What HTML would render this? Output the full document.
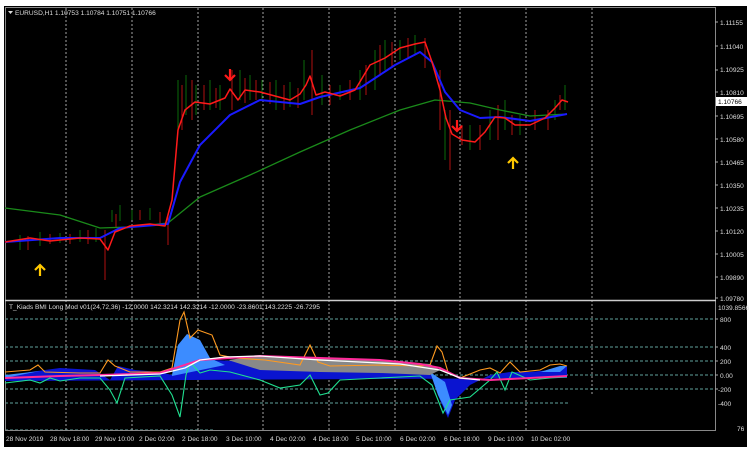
<!DOCTYPE html>
<html><head><meta charset="utf-8"><style>
body{margin:0;width:750px;height:450px;background:#fff;overflow:hidden}
svg{display:block}
text{font-family:"Liberation Sans",sans-serif;font-size:7px;fill:#ddd}
.b{font-size:6.6px}
</style></head><body>
<svg width="750" height="450" viewBox="0 0 750 450">
<rect x="4" y="6" width="743" height="441" fill="#000"/>
<g stroke="#ccc" stroke-width="0.8" stroke-dasharray="2,2">
<line x1="66" y1="8" x2="66" y2="430"/><line x1="132" y1="8" x2="132" y2="430"/>
<line x1="198" y1="8" x2="198" y2="430"/><line x1="263" y1="8" x2="263" y2="430"/>
<line x1="329" y1="8" x2="329" y2="430"/><line x1="395" y1="8" x2="395" y2="430"/>
<line x1="460" y1="8" x2="460" y2="430"/><line x1="526" y1="8" x2="526" y2="430"/>
<line x1="592" y1="8" x2="592" y2="395"/>
</g>
<g stroke="#7fd8d0" stroke-width="0.8" stroke-dasharray="3,2">
<line x1="5" y1="319" x2="715" y2="319"/><line x1="5" y1="347" x2="715" y2="347"/>
<line x1="5" y1="361" x2="715" y2="361"/><line x1="5" y1="375" x2="715" y2="375"/>
<line x1="5" y1="389" x2="715" y2="389"/><line x1="5" y1="403" x2="570" y2="403"/>
<line x1="5" y1="430" x2="215" y2="430"/>
</g>
<rect x="5.5" y="7.5" width="710" height="423" fill="none" stroke="#888" stroke-width="1"/>
<line x1="5" y1="300.5" x2="716" y2="300.5" stroke="#ccc" stroke-width="1.5"/>
<g stroke="#0a6a0a" stroke-width="1">
<path d="M20 235v15M40 232v14M60 233v10M80 230v12M96 228v14M112 210v12M120 205v16M132 210v10M150 208v12M178 80v50M186 75v40M196 85v30M210 80v30M220 85v25M240 70v30M250 75v25M262 80v20M276 80v30M290 82v25M304 60v40M322 75v30M340 85v15M360 70v30M375 50v40M385 40v30M400 40v20M415 35v20M445 110v50M470 125v25M490 110v30M505 100v30M520 115v20M555 100v20M565 85v25"/>
</g>
<g stroke="#b01010" stroke-width="1">
<path d="M28 236v14M50 234v10M70 234v10M88 230v14M105 230v50M116 214v14M140 210v10M160 212v14M168 215v30M182 85v45M192 80v40M204 85v25M216 88v20M232 70v40M245 78v25M256 80v20M270 82v22M284 85v25M298 88v20M312 50v65M330 85v20M350 80v20M366 65v30M380 45v30M392 42v25M408 38v20M425 38v30M440 70v60M450 110v60M462 125v20M480 125v25M498 105v35M512 115v20M535 110v20M548 110v20M560 95v15"/>
</g>
<polyline fill="none" stroke="#1a8a1a" stroke-width="1.3" stroke-linejoin="round" points="5,208 60,215 100,228 130,227 168,223 200,197 250,175 300,152 350,130 400,110 435,100 470,103 500,110 530,116 567,114"/>
<polyline fill="none" stroke="#1a1aff" stroke-width="2" stroke-linejoin="round" points="5,242 60,238 100,238 120,228 168,224 180,182 200,145 230,115 260,100 300,104 320,97 360,88 395,65 420,52 432,62 445,92 460,110 480,118 500,117 530,121 567,114"/>
<polyline fill="none" stroke="#ff1a1a" stroke-width="1.5" stroke-linejoin="round" points="5,242 30,238 50,241 80,238 100,239 108,250 115,232 130,226 150,224 165,226 172,200 178,130 185,110 195,102 210,104 225,98 230,89 238,100 245,90 260,92 275,96 290,100 300,94 306,85 310,76 316,95 325,92 340,96 355,90 370,65 385,58 400,48 415,44 425,42 432,62 440,90 446,118 452,134 462,140 475,142 485,132 495,117 505,118 515,125 530,125 545,118 555,108 562,100 568,102"/>
<g fill="none" stroke="#ffc800" stroke-width="2.2"><path d="M40 276v-10M35 270l5-5 5 5"/><path d="M513 169v-10M508 163l5-5 5 5"/></g>
<g fill="none" stroke="#ff1a1a" stroke-width="2.2"><path d="M230 69v10M225 75l5 5 5-5"/><path d="M457 120v10M452 126l5 5 5-5"/></g>
<path fill="#0a14d0" d="M5,377 30,372 60,368 95,370 110,380 118,366 135,370 160,372 172,375 180,345 188,335 200,350 210,360 260,362 300,368 330,372 380,372 430,372 440,400 448,418 455,400 470,385 490,375 510,372 530,372 550,370 567,366 567,378 5,381z"/>
<path fill="#3c8cff" d="M172,375 178,345 187,334 200,340 210,358 225,365 172,376z M430,372 438,395 448,415 452,405 445,382z M5,378 30,373 40,371 5,375z M540,372 560,366 567,366 560,372z"/>
<path fill="#888" d="M228,360 260,356 320,358 380,360 430,364 440,370 430,375 380,373 320,372 260,370z"/>
<polyline fill="none" stroke="#ff9a20" stroke-width="1.1" points="5,372 30,370 38,365 45,372 80,373 100,373 108,360 115,366 130,372 160,372 172,368 180,320 184,312 190,338 198,330 212,335 220,355 235,358 265,360 300,365 310,345 318,362 330,366 380,365 420,366 430,365 437,346 442,352 448,372 460,378 480,370 490,368 500,373 510,362 520,372 540,370 550,365 560,364 567,366"/>
<polyline fill="none" stroke="#20e090" stroke-width="1.1" points="5,383 30,380 40,383 50,378 60,381 80,378 100,378 110,390 117,403 125,378 160,376 172,395 180,417 186,375 190,362 200,373 210,370 230,372 260,380 280,388 300,385 310,375 320,395 328,393 340,380 380,378 420,376 432,385 438,400 443,413 450,400 470,397 490,380 497,372 505,390 512,372 530,380 550,378 567,377"/>
<polyline fill="none" stroke="#ff2a9a" stroke-width="2" points="5,378 60,376 100,375 160,373 200,360 230,358 260,356 320,358 380,360 420,364 440,368 460,378 490,380 530,378 567,376"/>
<polyline fill="none" stroke="#fff" stroke-width="1.3" points="100,376 160,374 185,368 200,360 225,357 260,356 320,360 400,364 440,370 460,378 480,380"/>
<path d="M8 11h5l-2.5 3z" fill="#ddd"/>
<text x="15" y="15" class="b">EURUSD,H1  1.10753 1.10784 1.10751 1.10766</text>
<text x="9" y="309" class="b">T_Kiads BMI Long Mod v01(24,72,36) -12.0000 142.3214 142.3214 -12.0000 -23.8601 143.2225 -26.7295</text>
<g class="b">
<text class="b" x="720" y="25">1.11155</text><text class="b" x="720" y="49">1.11040</text><text class="b" x="720" y="72">1.10925</text>
<text class="b" x="720" y="95">1.10810</text><text class="b" x="720" y="119">1.10695</text><text class="b" x="720" y="142">1.10580</text>
<text class="b" x="720" y="165">1.10465</text><text class="b" x="720" y="188">1.10350</text><text class="b" x="720" y="211">1.10235</text>
<text class="b" x="720" y="234">1.10120</text><text class="b" x="720" y="257">1.10005</text><text class="b" x="720" y="280">1.09890</text>
<text class="b" x="720" y="301">1.09780</text><text class="b" x="718" y="310">1039.8566</text>
<text class="b" x="720" y="322">800</text><text class="b" x="720" y="350">400</text><text class="b" x="720" y="364">200</text>
<text class="b" x="720" y="378">0.00</text><text class="b" x="718" y="392">-200</text><text class="b" x="718" y="406">-400</text><text class="b" x="737" y="431">76</text>
</g>
<rect x="716" y="97" width="31" height="9" fill="#fff"/>
<text x="718" y="104" class="b" style="fill:#000">1.10766</text>
<g stroke="#aaa"><path d="M715 22h3M715 46h3M715 70h3M715 92h3M715 116h3M715 139h3M715 162h3M715 185h3M715 208h3M715 231h3M715 254h3M715 277h3M715 298h3M715 319h3M715 347h3M715 361h3M715 375h3M715 389h3"/></g>
<g>
<text class="b" x="6" y="441">28 Nov 2019</text><text class="b" x="50" y="441">28 Nov 18:00</text><text class="b" x="95" y="441">29 Nov 10:00</text>
<text class="b" x="139" y="441">2 Dec 02:00</text><text class="b" x="182" y="441">2 Dec 18:00</text><text class="b" x="226" y="441">3 Dec 10:00</text>
<text class="b" x="270" y="441">4 Dec 02:00</text><text class="b" x="313" y="441">4 Dec 18:00</text><text class="b" x="356" y="441">5 Dec 10:00</text>
<text class="b" x="400" y="441">6 Dec 02:00</text><text class="b" x="444" y="441">6 Dec 18:00</text><text class="b" x="488" y="441">9 Dec 10:00</text>
<text class="b" x="531" y="441">10 Dec 02:00</text>
</g>
</svg>
</body></html>
